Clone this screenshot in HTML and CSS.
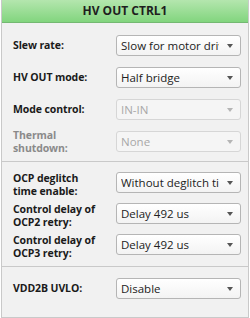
FILE: index.html
```html
<!DOCTYPE html>
<html>
<head>
<meta charset="utf-8">
<link rel="stylesheet" href="styles.css">
</head>
<body>
<div class="panel">
  <div class="header">HV OUT CTRL1</div>
  <div class="section s1">
    <div class="row">
      <div class="label">Slew rate:</div>
      <div class="combo"><span class="val">Slow for motor driver</span><span class="arrow"></span></div>
    </div>
    <div class="row">
      <div class="label">HV OUT mode:</div>
      <div class="combo"><span class="val">Half bridge</span><span class="arrow"></span></div>
    </div>
    <div class="row">
      <div class="label">Mode control:</div>
      <div class="combo disabled"><span class="val">IN-IN</span><span class="arrow"></span></div>
    </div>
    <div class="row">
      <div class="label off">Thermal<br>shutdown:</div>
      <div class="combo disabled"><span class="val">None</span><span class="arrow"></span></div>
    </div>
  </div>
  <div class="section s2">
    <div class="row tall">
      <div class="label">OCP deglitch<br>time enable:</div>
      <div class="combo"><span class="val">Without deglitch time</span><span class="arrow"></span></div>
    </div>
    <div class="row tall">
      <div class="label">Control delay of<br>OCP2 retry:</div>
      <div class="combo"><span class="val">Delay 492 us</span><span class="arrow"></span></div>
    </div>
    <div class="row tall">
      <div class="label">Control delay of<br>OCP3 retry:</div>
      <div class="combo"><span class="val">Delay 492 us</span><span class="arrow"></span></div>
    </div>
  </div>
  <div class="section s3">
    <div class="row">
      <div class="label">VDD2B UVLO:</div>
      <div class="combo"><span class="val">Disable</span><span class="arrow"></span></div>
    </div>
  </div>
</div>
</body>
</html>
```
FILE: styles.css
```css
html, body {
  margin: 0;
  padding: 0;
  background: #ffffff;
}
body {
  font-family: "Open Sans", "Noto Sans", sans-serif;
  color: #1a1a1a;
}
.panel {
  width: 246px;
  height: 317px;
  margin-left: 1px;
  border: 1px solid #c9c9c9;
  border-top: none;
  background: #f1f1f1;
  box-sizing: content-box;
  display: flex;
  flex-direction: column;
}
.header {
  height: 23px;
  box-sizing: border-box;
  background: linear-gradient(#b4e6ae, #82d57e);
  border-bottom: 1px solid #74b972;
  text-align: center;
  font-weight: 700;
  font-size: 12px;
  line-height: 22px;
  color: #1e1e1e;
}
.section {
  display: flex;
  flex-direction: column;
  padding: 0 7px 0 11px;
}
.s1 {
  padding-top: 12px;
  padding-bottom: 9px;
  gap: 11px;
  border-bottom: 1px solid #c9c9c9;
}
.s2 {
  padding-top: 10px;
  padding-bottom: 5px;
  gap: 4px;
  border-bottom: 1px solid #c9c9c9;
}
.s3 {
  padding-top: 11px;
}
.row {
  display: flex;
  align-items: center;
  height: 21px;
}
.row.tall {
  height: 27px;
  align-items: flex-start;
}
.label {
  width: 103px;
  font-size: 10.5px;
  font-weight: 700;
  line-height: 13px;
  color: #1a1a1a;
  letter-spacing: -0.1px;
}
.label.off {
  color: #8a8a8a;
}
.combo {
  width: 125px;
  height: 21px;
  box-sizing: border-box;
  border: 1px solid #b5b5b5;
  border-radius: 3px;
  background: linear-gradient(#ffffff, #f3f3f3);
  display: flex;
  align-items: center;
  padding-left: 4px;
  position: relative;
}
.combo .val {
  width: 98px;
  overflow: hidden;
  white-space: nowrap;
  font-size: 11.5px;
  color: #222;
}
.combo .arrow {
  position: absolute;
  right: 7px;
  top: 8px;
  width: 0;
  height: 0;
  border-left: 3.5px solid transparent;
  border-right: 3.5px solid transparent;
  border-top: 4px solid #555;
}
.combo.disabled {
  border-color: #d6d6d6;
  background: #f5f5f5;
}
.combo.disabled .val {
  color: #a8a8a8;
}
.combo.disabled .arrow {
  border-top-color: #b5b5b5;
}
```
